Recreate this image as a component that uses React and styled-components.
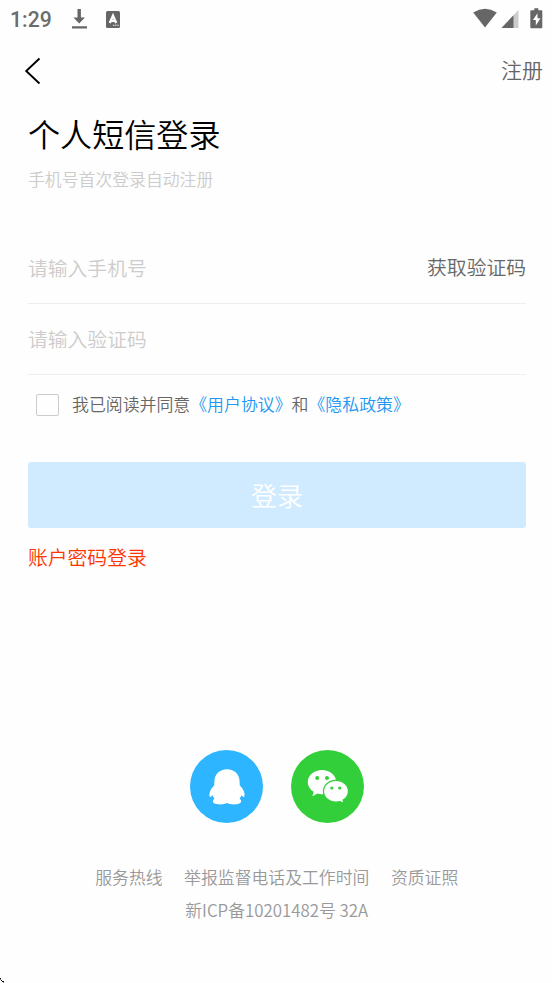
import React, { useState } from "react";
import styled, { createGlobalStyle } from "styled-components";

const App = () => {
  const [phone, setPhone] = useState("");
  const [code, setCode] = useState("");
  const [agreed, setAgreed] = useState(false);

  return (
    <Page>
      <GlobalStyle />
      <StatusBar>
        <Clock>1:29</Clock>
        <DownloadIcon />
        <KeyboardIcon />
        <Spacer />
        <SignalIcons />
      </StatusBar>

      <NavBar>
        <BackButton aria-label="返回">
          <svg width="18" height="28" viewBox="0 0 18 28" fill="none">
            <path d="M15.5 1.5 2.2 14l13.3 12.5" stroke="#000" strokeWidth="1.9" />
          </svg>
        </BackButton>
        <RegisterLink>注册</RegisterLink>
      </NavBar>

      <Content>
        <Title>个人短信登录</Title>
        <Subtitle>手机号首次登录自动注册</Subtitle>

        <Field>
          <Input
            placeholder="请输入手机号"
            value={phone}
            onChange={(e) => setPhone(e.target.value)}
          />
          <CodeButton>获取验证码</CodeButton>
        </Field>
        <Field>
          <Input
            placeholder="请输入验证码"
            value={code}
            onChange={(e) => setCode(e.target.value)}
          />
        </Field>

        <Agreement>
          <Checkbox
            type="checkbox"
            checked={agreed}
            onChange={() => setAgreed(!agreed)}
          />
          <AgreementText>
            我已阅读并同意<Policy>《用户协议》</Policy>和<Policy>《隐私政策》</Policy>
          </AgreementText>
        </Agreement>

        <LoginButton>登录</LoginButton>
        <PasswordLogin>账户密码登录</PasswordLogin>
      </Content>

      <SocialRow>
        <SocialButton color="#2db5ff" aria-label="QQ">
          <QQIcon />
        </SocialButton>
        <SocialButton color="#32cf3a" aria-label="微信">
          <WechatIcon />
        </SocialButton>
      </SocialRow>

      <Footer>
        <FooterLinks>
          <span>服务热线</span>
          <span>举报监督电话及工作时间</span>
          <span>资质证照</span>
        </FooterLinks>
        <span>新ICP备10201482号 32A</span>
      </Footer>

      <Cursor width="5" height="5" viewBox="0 0 5 5" shapeRendering="crispEdges">
        <path d="M0 0h1v1H0zM1 2h1v1H1zM2 3h1v1H2zM3 3h1v1H3z" fill="#111" />
        <path d="M0 1h1v1H0zM3 4h1v1H3z" fill="#777" />
      </Cursor>
    </Page>
  );
};

const DownloadIcon = () => (
  <svg width="17" height="22" viewBox="0 0 17 22" fill="#666">
    <path d="M6.5 1h3.4v8.5H14l-5.8 6-5.8-6h4.1zM1 18.3h15v2.2H1z" />
  </svg>
);

const KeyboardIcon = () => (
  <svg width="14" height="17" viewBox="0 0 14 17">
    <rect width="14" height="17" rx="1.5" fill="#666" />
    <path
      d="M3.8 12 7 4.6l3.2 7.4M5 9.8h4"
      stroke="#fff"
      strokeWidth="2.3"
      fill="none"
    />
    <path d="M7 13.8h1.3v1H7zM9.2 13.8h1.3v1H9.2zM11.4 13.8h1.3v1h-1.3z" fill="#fff" />
  </svg>
);

const SignalIcons = () => (
  <svg width="72" height="22" viewBox="0 0 72 22" fill="#666">
    <path d="M.2 4.4Q12-2.9 23.8 4.4L12 19.5z" />
    <path d="M45.5 2v18h-17z" fill="#ccc" />
    <path d="M40.5 7.3V20h-12z" />
    <path d="M61.3.2h4v2h3.2c.5 0 .8.4.8.9v16.2c0 .5-.3.9-.8.9H58.2c-.5 0-.9-.4-.9-.9V3.1c0-.5.4-.9.9-.9h3.1z" />
    <path d="M64.5 5.2 59.9 12h2.9v5.5l4.7-7.3h-3z" fill="#fff" />
  </svg>
);

const QQIcon = () => (
  <svg width="36" height="36" viewBox="0 0 36 36" fill="#fff">
    <path d="M18 .2C10.600.2 5.700 5.200 5.500 11.500c-.1 1.800-.3 3.200-.3 5C2.600 19 .4 22.600.4 25.500c0 1.400.3 2.300.9 2.400.8 0 1.600-.8 2.300-1.600.4 1.200.9 2.300 1.900 3.400-1 .5-1.600 1.300-1.600 2.300 0 2.600 3.300 3.400 7.200 3.400 3 0 5.500-.5 6.900-1.400 1.400.9 3.900 1.400 6.900 1.400 3.900 0 7.200-.8 7.200-3.400 0-1-.6-1.800-1.600-2.300 1-1.100 1.500-2.200 1.900-3.400.7.800 1.500 1.600 2.300 1.600.6-.1.900-1 .9-2.400 0-2.900-2.200-6.500-4.800-9 0-1.800-.2-3.200-.3-5C30.300 5.200 25.400.2 18 .2z" />
  </svg>
);

const WechatIcon = () => (
  <svg width="42" height="36" viewBox="0 0 42 36">
    <path
      d="M15 1C7.200 1 .8 6.300.8 13c0 4.100 2.300 7.600 6 9.800l-1.400 4.400 5-2.600c1.500.4 3 .6 4.600.6C22.800 25.200 29.200 19.700 29.200 13S22.800 1 15 1z"
      fill="#fff"
    />
    <path
      d="M29 11.300c-6.900 0-12.500 4.800-12.500 10.900S22.100 33.200 29 33.200c1.400 0 2.700-.2 3.900-.5l4.200 1.900-1.100-3.500c3.200-2 5.400-5.100 5.400-8.900 0-6.100-5.500-10.900-12.400-10.900z"
      fill="#fff"
      stroke="#32cf3a"
      strokeWidth="1.2"
    />
    <g fill="#32cf3a">
      <circle cx="10.2" cy="9.1" r="2" />
      <circle cx="20" cy="9.1" r="2" />
      <circle cx="24.8" cy="19" r="1.6" />
      <circle cx="32.7" cy="19" r="1.6" />
    </g>
  </svg>
);

const GlobalStyle = createGlobalStyle`
  * {
    box-sizing: border-box;
  }

  body {
    margin: 0;
    background-color: #fefefe;
    font-family: "Noto Sans CJK SC", sans-serif;
    font-weight: 350;
  }

  button,
  input {
    font: inherit;
    border: none;
    padding: 0;
    background: none;
  }
`;

const Page = styled.div`
  display: flex;
  flex-direction: column;
  height: 983px;
  position: relative;
  overflow: hidden;
`;

const StatusBar = styled.div`
  display: flex;
  align-items: center;
  height: 38px;
  padding: 0 8px 0 10px;
  flex-shrink: 0;

  svg {
    display: block;
    flex-shrink: 0;
  }

  svg + svg {
    margin-left: 18px;
  }
`;

const Clock = styled.span`
  width: 61px;
  font-family: Roboto, sans-serif;
  font-size: 21.2px;
  font-weight: 500;
  line-height: 24px;
  padding-top: 1px;
  color: #6c6c6c;
`;

const Spacer = styled.div`
  flex: 1;

  & + svg {
    margin-right: -1px;
  }
`;

const NavBar = styled.div`
  display: flex;
  align-items: center;
  justify-content: space-between;
  height: 66px;
  padding: 0 9px 0 24px;
`;

const BackButton = styled.button`
  display: flex;
`;

const RegisterLink = styled.button`
  padding-bottom: 4px;
  color: #666;
  font-size: 21px;
  line-height: 30px;
`;

const Content = styled.main`
  padding: 9px 26px 0 28px;
`;

const Title = styled.h1`
  margin: 0;
  font-size: 32.1px;
  font-weight: inherit;
  line-height: 40px;
  color: #000;
`;

const Subtitle = styled.p`
  margin: 14px 0 42px;
  font-size: 16.85px;
  line-height: 24px;
  color: #ccc;
`;

const Field = styled.div`
  display: flex;
  align-items: center;
  height: 71px;
  padding-bottom: 2px;
  border-bottom: 1px solid #eee;
`;

const Input = styled.input`
  flex: 1;
  min-width: 0;
  height: 40px;
  font-size: 19.8px;
  color: #333;
  outline: none;

  &::placeholder {
    color: #ccc;
  }
`;

const CodeButton = styled.button`
  padding-bottom: 2px;
  font-size: 19.8px;
  color: #666;
`;

const Agreement = styled.label`
  display: flex;
  align-items: center;
  gap: 13px;
  height: 60px;
  padding-left: 8px;
  font-size: 16.9px;
  color: #666;
`;

const AgreementText = styled.span`
  padding-bottom: 3px;
`;

const Checkbox = styled.input`
  appearance: none;
  width: 23px;
  height: 22px;
  margin: 0;
  border: 1px solid #ccc;
  border-radius: 2px;

  &:checked {
    background-color: #2196f3;
  }
`;

const Policy = styled.span`
  color: #2196f3;
`;

const LoginButton = styled.button`
  display: block;
  width: 100%;
  height: 66px;
  margin-top: 27px;
  padding-bottom: 2px;
  border-radius: 3px;
  background-color: #d0eaff;
  color: #fff;
  font-size: 26px;
`;

const PasswordLogin = styled.button`
  display: block;
  margin-top: 14px;
  font-size: 19.8px;
  line-height: 30px;
  color: #ff3500;
`;

const SocialRow = styled.div`
  display: flex;
  justify-content: center;
  gap: 27.5px;
  margin-top: 177.5px;
  padding-left: 2px;
`;

const SocialButton = styled.button`
  display: flex;
  align-items: center;
  justify-content: center;
  width: 73.5px;
  height: 73.5px;
  padding-top: 2px;
  border-radius: 50%;
  background-color: ${(props) => props.color};
`;

const Footer = styled.footer`
  display: flex;
  flex-direction: column;
  align-items: center;
  gap: 9px;
  margin-top: 42px;
  padding-left: 1.5px;
  font-size: 16.85px;
  line-height: 24px;
  color: #999;
`;

const FooterLinks = styled.div`
  display: flex;
  gap: 21.5px;
`;

const Cursor = styled.svg`
  position: absolute;
  left: 0;
  bottom: 0;
`;

export default App;
